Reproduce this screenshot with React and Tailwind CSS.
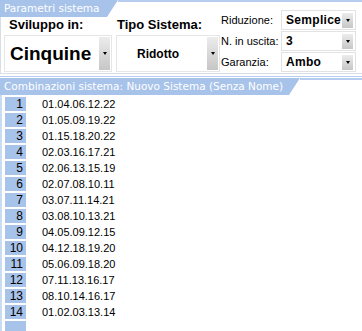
import React from "react";

const rows = [
  "01.04.06.12.22",
  "01.05.09.19.22",
  "01.15.18.20.22",
  "02.03.16.17.21",
  "02.06.13.15.19",
  "02.07.08.10.11",
  "03.07.11.14.21",
  "03.08.10.13.21",
  "04.05.09.12.15",
  "04.12.18.19.20",
  "05.06.09.18.20",
  "07.11.13.16.17",
  "08.10.14.16.17",
  "01.02.03.13.14",
  "",
];

function DropBtn({ tall }) {
  return (
    <div
      className={`flex w-[11px] shrink-0 items-center justify-center bg-gradient-to-b from-[#ececec] to-[#c6c6c6] ${
        tall ? "h-[33px]" : "h-[15px]"
      }`}
    >
      <div className="h-0 w-0 border-x-[2.5px] border-t-[3px] border-x-transparent border-t-black" />
    </div>
  );
}

function SmallCombo({ value }) {
  return (
    <div className="flex h-[20px] w-[75px] items-center border border-[#e2e2e2] pl-[4px] pr-[2px]">
      <span className="flex-1 text-[12px] font-bold leading-none tracking-[0.3px] text-black">{value}</span>
      <DropBtn />
    </div>
  );
}

function Tab({ label, width }) {
  return (
    <div className="flex h-[17px] items-start">
      <div
        className={`h-[17px] shrink-0 whitespace-nowrap bg-[#a8c3ea] pl-[4px] font-['DejaVu_Sans',sans-serif] text-[10.5px] leading-[17px] text-white [clip-path:polygon(0_0,100%_0,calc(100%-11px)_100%,0_100%)] ${width}`}
      >
        {label}
      </div>
      <div className="h-[2px] flex-1 bg-[#b7cdef]" />
    </div>
  );
}

export default function App() {
  return (
    <div className="relative h-[331px] w-[362px] overflow-hidden bg-white font-['Liberation_Sans',Arial,sans-serif] text-black">
      <Tab label="Parametri sistema" width="w-[118px]" />
      <div className="flex h-[57px] border-b border-l border-[#d8dde6]">
        <div className="flex w-[112px] flex-col pl-[3px]">
          <div className="pl-[5px] pt-[1px] text-[13px] font-bold leading-[14px]">Sviluppo in:</div>
          <div className="mt-[3px] flex h-[37px] w-[108px] items-center border border-[#e6e6e6] pl-[5px] pr-[1px]">
            <span className="flex-1 text-[19px] font-bold leading-none">Cinquine</span>
            <DropBtn tall />
          </div>
        </div>
        <div className="flex w-[108px] flex-col pl-[3px]">
          <div className="pl-[1px] pt-[1px] text-[13px] font-bold leading-[14px]">Tipo Sistema:</div>
          <div className="mt-[3px] flex h-[37px] w-[104px] items-center border border-[#e6e6e6] pr-[1px]">
            <span className="flex-1 pr-[8px] text-center text-[12px] font-bold leading-none">Ridotto</span>
            <DropBtn tall />
          </div>
        </div>
        <div className="-mt-[7px] flex flex-1 flex-col gap-[1px]">
          {[
            ["Riduzione:", "Semplice"],
            ["N. in uscita:", "3"],
            ["Garanzia:", "Ambo"],
          ].map(([l, v]) => (
            <div key={l} className="flex h-[20px] items-center">
              <span className="w-[60px] text-[11px] leading-none">{l}</span>
              <SmallCombo value={v} />
            </div>
          ))}
        </div>
      </div>
      <div className="mt-[2px] h-[1px] bg-[#b7cdef]" />
      <div className="mt-[1px]">
        <Tab label="Combinazioni sistema: Nuovo Sistema (Senza Nome)" width="w-[300px]" />
      </div>
      <div className="flex flex-col border-l-2 border-[#c9daf3] pt-[2px]">
        {rows.map((r, i) => (
          <div key={i} className="flex h-[16px] items-start">
            <div className="ml-[3px] h-[14px] w-[21px] bg-[#a8c3ea] pr-[3px] text-right text-[12px] leading-[14px]">
              {r ? i + 1 : ""}
            </div>
            <div className="pl-[16px] text-[11px] leading-[14px]">{r}</div>
          </div>
        ))}
      </div>
    </div>
  );
}
